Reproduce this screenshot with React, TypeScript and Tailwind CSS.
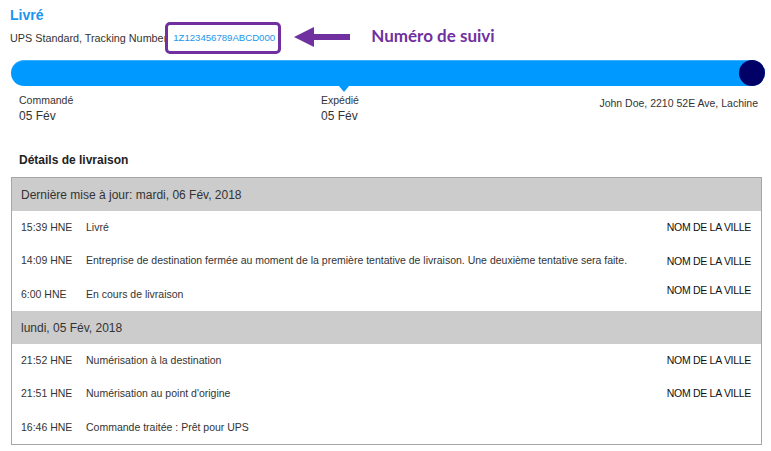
import React from 'react';

type Event = { time: string; label: string; city?: string; cityShift?: boolean };

const groups: { title: string; events: Event[] }[] = [
  {
    title: 'Dernière mise à jour: mardi, 06 Fév, 2018',
    events: [
      { time: '15:39 HNE', label: 'Livré', city: 'NOM DE LA VILLE' },
      {
        time: '14:09 HNE',
        label:
          'Entreprise de destination fermée au moment de la première tentative de livraison. Une deuxième tentative sera faite.',
        city: 'NOM DE LA VILLE',
      },
      { time: '6:00 HNE', label: 'En cours de livraison', city: 'NOM DE LA VILLE', cityShift: true },
    ],
  },
  {
    title: 'lundi, 05 Fév, 2018',
    events: [
      { time: '21:52 HNE', label: 'Numérisation à la destination', city: 'NOM DE LA VILLE' },
      { time: '21:51 HNE', label: "Numérisation au point d'origine", city: 'NOM DE LA VILLE' },
      { time: '16:46 HNE', label: 'Commande traitée : Prêt pour UPS' },
    ],
  },
];

function LeftArrow() {
  return (
    <svg width="58" height="22" viewBox="0 0 58 22" className="shrink-0">
      <polygon points="1,11 21,1 21,21" fill="#7030a0" />
      <rect x="20" y="8" width="37" height="6" fill="#7030a0" />
    </svg>
  );
}

export default function App() {
  return (
    <div className="w-[771px] h-[451px] bg-white text-[#333] font-['Liberation_Sans',Arial,sans-serif] overflow-hidden">
      <div className="pl-[10px] pr-[6px] pt-[6px]">
        {/* Status */}
        <div className="text-[14px] leading-[18px] font-bold text-[#1b95f0]">Livré</div>

        {/* Tracking line */}
        <div className="flex items-center h-[32px] -mt-[2px]">
          <span className="text-[10.8px] leading-[14px] text-[#333] whitespace-nowrap">
            UPS Standard, Tracking Number
          </span>
          <div className="relative -ml-[2px] w-[116px] h-[32px] shrink-0 border-[3px] border-[#7030a0] rounded-[5px] flex items-center pl-[5px] bg-white">
            <span className="text-[9.6px] text-[#1b95f0]">1Z123456789ABCD000</span>
          </div>
          <div className="ml-[12px] -mt-[2px]">
            <LeftArrow />
          </div>
          <span className="ml-[20px] -mt-[4px] font-['Lato',sans-serif] font-bold text-[17px] text-[#7030a0] whitespace-nowrap">
            Numéro de suivi
          </span>
        </div>

        {/* Progress bar */}
        <div className="relative mt-[6px] ml-[1px] w-[754px] h-[26px] rounded-full bg-[#0099ff] border-t border-[#3db1ff] flex justify-end">
          <div className="w-[26px] h-[26px] -mt-[1px] rounded-full bg-[#000066]" />
          <div className="absolute left-[328px] top-[25px] w-0 h-0 border-l-[5px] border-r-[5px] border-t-[6px] border-l-transparent border-r-transparent border-t-[#0099ff]" />
        </div>

        {/* Milestones */}
        <div className="flex mt-[8px] pl-[9px] pr-[7px]">
          <div className="w-[302px]">
            <div className="text-[10.5px] leading-[12px]">Commandé</div>
            <div className="text-[12px] leading-[16px] mt-[2px]">05 Fév</div>
          </div>
          <div className="flex-1">
            <div className="text-[10.5px] leading-[12px]">Expédié</div>
            <div className="text-[12px] leading-[16px] mt-[2px]">05 Fév</div>
          </div>
          <div className="text-[10.5px] leading-[12px] mt-[3px]">John Doe, 2210 52E Ave, Lachine</div>
        </div>

        {/* Details */}
        <div className="mt-[29px] pl-[9px] text-[12px] leading-[14px] font-bold text-[#222]">
          Détails de livraison
        </div>

        <div className="mt-[10px] ml-[1px] w-[751px] border border-[#a6a6a6]">
          {groups.map((g) => (
            <div key={g.title}>
              <div className="h-[33px] bg-[#cccccc] flex items-center pl-[9px] text-[12px] text-[#333]">
                {g.title}
              </div>
              {g.events.map((e) => (
                <div key={e.time} className="h-[33.4px] flex items-center pl-[9px] pr-[10px] text-[10.5px]">
                  <span className="w-[65px] shrink-0">{e.time}</span>
                  <span className="flex-1 whitespace-nowrap">{e.label}</span>
                  {e.city && (
                    <span
                      className={`tracking-[-0.3px] text-[#111] ${e.cityShift ? '-mt-[8px]' : e.label.length > 60 ? 'mt-[2px]' : ''}`}
                    >
                      {e.city}
                    </span>
                  )}
                </div>
              ))}
            </div>
          ))}
        </div>
      </div>
    </div>
  );
}
